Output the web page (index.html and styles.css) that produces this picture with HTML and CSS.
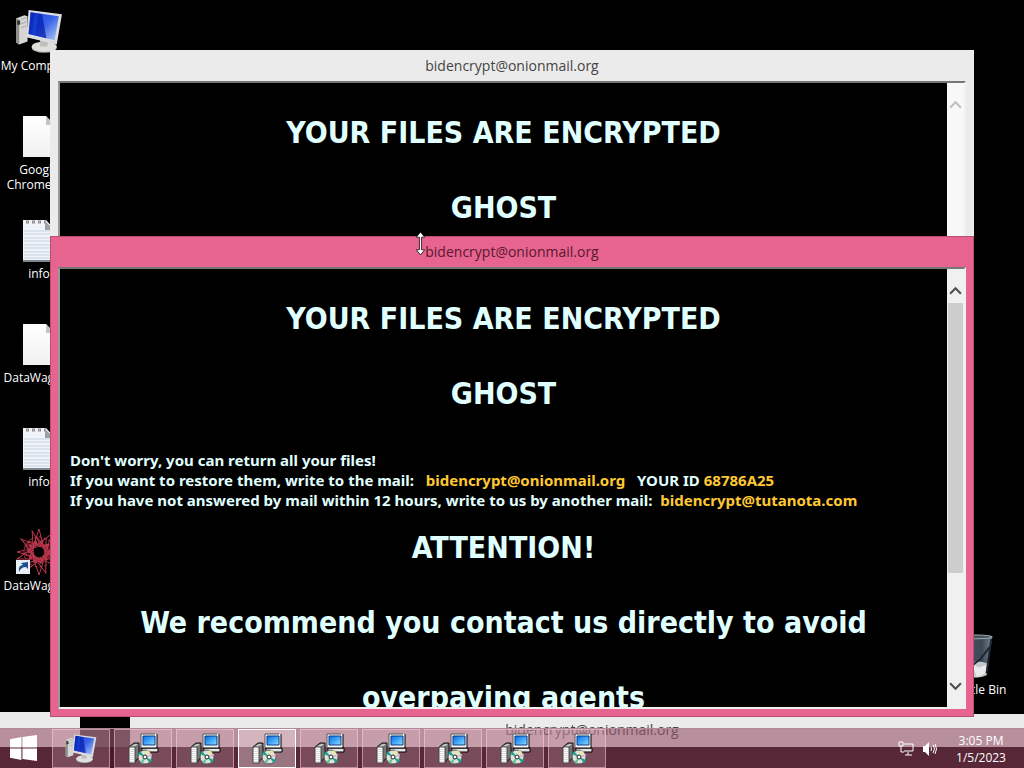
FILE: index.html
```html
<!DOCTYPE html>
<html lang="en">
<head>
    <meta charset="UTF-8">
    <meta name="viewport" content="width=device-width, initial-scale=1.0">
    <title>Desktop</title>
    <link rel="stylesheet" href="styles.css">
</head>
<body>

    <svg class="defs" aria-hidden="true">
        <defs>
            <linearGradient id="screen" x1="0" y1="0" x2="1" y2="1">
                <stop offset="0" stop-color="#1a3fe0"/>
                <stop offset="0.5" stop-color="#3a63e6"/>
                <stop offset="1" stop-color="#b4ccf8"/>
            </linearGradient>
            <linearGradient id="paper" x1="0" y1="0" x2="0" y2="1">
                <stop offset="0" stop-color="#ffffff"/>
                <stop offset="1" stop-color="#f0f0f0"/>
            </linearGradient>
            <linearGradient id="glass" x1="0" y1="0" x2="1" y2="0">
                <stop offset="0" stop-color="#4d5a66"/>
                <stop offset="0.7" stop-color="#3c4853"/>
                <stop offset="1" stop-color="#77838d"/>
            </linearGradient>
            <linearGradient id="crt" x1="0" y1="0" x2="1" y2="1">
                <stop offset="0" stop-color="#0a6fe8"/>
                <stop offset="0.5" stop-color="#3fa5f8"/>
                <stop offset="1" stop-color="#8edcff"/>
            </linearGradient>
        </defs>
        <symbol id="computer" viewBox="4 4 46 46">
            <path d="M5 14l8-3 3 1v24l-8 3-3-2z" fill="#d6d6d2"/>
            <path d="M5 14l3 1v24l-3-2z" fill="#8e8e8a"/>
            <path d="M6 16h3v4H6z" fill="#333"/>
            <path d="M10 15l5-2M10 19l5-2M10 23l5-2" stroke="#aaa"/>
            <ellipse cx="32" cy="42" rx="12" ry="5" fill="#a9aaa8"/>
            <ellipse cx="32" cy="41" rx="12" ry="5" fill="#dfdfdc"/>
            <path d="M28 32l8 2-1 7h-7z" fill="#bfc0be"/>
            <path d="M17 6l32 4-5 29-29-7z" fill="#dcdde0"/>
            <path d="M19 8l27 4-4 23-25-6z" fill="url(#screen)"/>
            <path d="M19 8l11 2 4 23-17-4z" fill="#0520b0" opacity="0.75"/>
            <path d="M23 9l-3 20 4 1 2-20z" fill="#1746dc" opacity="0.6"/>
        </symbol>
        <symbol id="file" viewBox="0 0 32 42">
            <path d="M0 0h23l9 10v31H0z" fill="url(#paper)"/>
            <path d="M23 0v9h9z" fill="#c4c4c4"/>
        </symbol>
        <symbol id="notes" viewBox="0 0 32 42">
            <path d="M0 0h23l9 10v31H0z" fill="#f0f4f8"/>
            <path d="M1 11h30M1 14h30M1 18h30M1 21h30M1 25h30M1 28h30M1 32h30M1 35h30M1 38h30" stroke="#c5d3e3"/>
            <path d="M3 2h20" stroke="#888" stroke-width="3" stroke-dasharray="3 3"/>
            <path d="M4 2h20" stroke="#f0f4f8" stroke-dasharray="1 5"/>
            <path d="M0 41h32" stroke="#7d858d" stroke-width="2"/>
            <path d="M22 1v9h9z" fill="#9aa0a6"/>
        </symbol>
        <symbol id="star" viewBox="0 0 48 48">
            <g fill="none" stroke="#b8364c" stroke-width="1">
                <path d="M24 1l8 31L2 24l32-8-10 31L13 13l33 11-33 11z"/>
                <path d="M24 1l8 31L2 24l32-8-10 31L13 13l33 11-33 11z" transform="rotate(36 24 24)"/>
                <path d="M24 1l8 31L2 24l32-8-10 31L13 13l33 11-33 11z" transform="rotate(72 24 24)"/>
                <circle cx="24" cy="24" r="10" stroke-width="3" stroke-dasharray="3 3"/>
                <circle cx="24" cy="24" r="15" stroke-dasharray="3 2"/>
            </g>
            <circle cx="24" cy="24" r="5" fill="#000"/>
        </symbol>
        <symbol id="bin" viewBox="0 0 40 48">
            <path d="M2 3l5 40q13 6 25 0l6-40z" fill="url(#glass)"/>
            <path d="M7 32l2 11q12 5 23 0l2-12q-13-5-27 1z" fill="#c3c8c8"/>
            <path d="M17 32l7 3 8-3-1 9-9 4" fill="#e8eaea"/>
            <path d="M35 14l-9 12-8 6M37 5l-5 36" stroke="#1c2530" stroke-width="2" fill="none"/>
            <ellipse cx="20" cy="3" rx="18" ry="2" fill="#46525c" stroke="#a5adb3"/>
        </symbol>
        <symbol id="installer" viewBox="0 0 32 32">
            <path d="M2 14l5-4h5v14l-5 6z" fill="#777" stroke="#111"/>
            <path d="M3 14l5-3h3l-4 3z" fill="#ccc"/>
            <path d="M2 14h6v16H2z" fill="#fff" stroke="#444"/>
            <path d="M4 16v13M6 16v13" stroke="#b5b5b5" stroke-dasharray="1 1"/>
            <path d="M15 15h16v4H15z" fill="#e6e6e6" stroke="#000"/>
            <path d="M14 1h16v14H14z" fill="#f8f8f8"/>
            <path d="M14 14V1h14" fill="none" stroke="#555"/>
            <path d="M30 1v14H14" fill="none" stroke="#000"/>
            <path d="M16 3h12v9H16z" fill="url(#crt)" stroke="#0c3a80"/>
            <circle cx="18" cy="24" r="7" fill="#dde2dd" stroke="#555"/>
            <path d="M18 24l-7-3 2-3zM18 24l7 3-2 3z" fill="#19a08c"/>
            <path d="M18 24l2-7 3 2z" fill="#ece9a0"/>
            <path d="M18 24l-5 5 3 2z" fill="#69c39a"/>
            <path d="M18 24l7-3v2z" fill="#d8a6c8"/>
            <circle cx="18" cy="24" r="2" fill="#fff" stroke="#222"/>
        </symbol>
    </svg>

    <main class="desktop">
        <ul class="icons">
            <li class="icon"><svg class="icon-large"><use href="#computer"/></svg><span>My Computer</span></li>
            <li class="icon"><svg class="icon-file"><use href="#file"/></svg><span>Google<br>Chrome.lnk</span></li>
            <li class="icon"><svg class="icon-file"><use href="#notes"/></svg><span>info</span></li>
            <li class="icon"><svg class="icon-file"><use href="#file"/></svg><span>DataWagons</span></li>
            <li class="icon"><svg class="icon-file"><use href="#notes"/></svg><span>info</span></li>
            <li class="icon">
                <svg class="icon-large" viewBox="0 0 48 48">
                    <use href="#star"/>
                    <path d="M1 32h14v14H1z" fill="#e8eef5"/>
                    <path d="M4 44q-1-7 4-7l-2-2 7-1v7l-2-2q-5 0-7 5z" fill="#1f4f91"/>
                </svg>
                <span>DataWagons</span>
            </li>
        </ul>
        <div class="icon recycle"><svg class="icon-bin"><use href="#bin"/></svg><span>Recycle Bin</span></div>

        <section class="window window-left"></section>
        <section class="window window-low">
            <header class="title">bidencrypt@onionmail.org</header>
        </section>

        <section class="window window-back">
            <header class="title">bidencrypt@onionmail.org</header>
            <div class="frame">
                <div class="note">
                    <h1>YOUR FILES ARE ENCRYPTED</h1>
                    <h1>GHOST</h1>
                </div>
                <div class="scrollbar">
                    <button type="button" class="arrow" aria-label="Scroll up"><svg viewBox="0 0 12 10"><path d="M1 8l5-5 5 5"/></svg></button>
                </div>
            </div>
        </section>

        <section class="window window-active">
            <header class="title">bidencrypt@onionmail.org</header>
            <div class="frame">
                <div class="note">
                    <h1>YOUR FILES ARE ENCRYPTED</h1>
                    <h1>GHOST</h1>
                    <p>
                        Don't worry, you can return all your files!<br>
                        If you want to restore them, write to the mail: &nbsp; <b>bidencrypt@onionmail.org</b> &nbsp; YOUR ID <b>68786A25</b><br>
                        If you have not answered by mail within 12 hours, write to us by another mail: &nbsp;<b>bidencrypt@tutanota.com</b>
                    </p>
                    <h1>ATTENTION!</h1>
                    <h1>We recommend you contact us directly to avoid</h1>
                    <h1>overpaying agents</h1>
                </div>
                <div class="scrollbar">
                    <button type="button" class="arrow" aria-label="Scroll up"><svg viewBox="0 0 12 10"><path d="M1 8l5-5 5 5"/></svg></button>
                    <div class="track"><div class="thumb"></div></div>
                    <button type="button" class="arrow arrow-down" aria-label="Scroll down"><svg viewBox="0 0 12 10"><path d="M1 2l5 5 5-5"/></svg></button>
                </div>
            </div>
        </section>

        <svg class="cursor" viewBox="0 0 10 22"><path d="M5 0l4 5H6v12h3l-4 5-4-5h3V5H1z" fill="#fff" stroke="#000" stroke-width="0.7"/></svg>
    </main>

    <footer class="taskbar">
        <button type="button" class="start" aria-label="Start">
            <svg viewBox="0 0 26 26"><path d="M0 4l11-2v10H0zM12 2l14-2v12H12zM0 13h11v11L0 22zM12 13h14v12l-14-2z" fill="#fff"/></svg>
        </button>
        <nav class="tasks">
            <button type="button" class="task" aria-label="My Computer"><svg><use href="#computer"/></svg></button>
            <button type="button" class="task" aria-label="Window 1"><svg><use href="#installer"/></svg></button>
            <button type="button" class="task" aria-label="Window 2"><svg><use href="#installer"/></svg></button>
            <button type="button" class="task current" aria-label="Window 3"><svg><use href="#installer"/></svg></button>
            <button type="button" class="task" aria-label="Window 4"><svg><use href="#installer"/></svg></button>
            <button type="button" class="task" aria-label="Window 5"><svg><use href="#installer"/></svg></button>
            <button type="button" class="task" aria-label="Window 6"><svg><use href="#installer"/></svg></button>
            <button type="button" class="task" aria-label="Window 7"><svg><use href="#installer"/></svg></button>
            <button type="button" class="task" aria-label="Window 8"><svg><use href="#installer"/></svg></button>
        </nav>
        <div class="tray">
            <svg viewBox="0 0 16 16"><path d="M6 3h9v7H6M10 11v3M7 14h7M1 1h4v4H1zM3 5v6h3" fill="none" stroke="#fff"/></svg>
            <svg viewBox="0 0 16 16"><path d="M1 5h2l4-4v14l-4-4H1z" fill="#fff"/><path d="M9 6q1 2 0 4M11 4q3 4 0 8M13 3q3 5 0 10" fill="none" stroke="#fff"/></svg>
        </div>
        <div class="clock">
            <span>3:05 PM</span>
            <span>1/5/2023</span>
        </div>
    </footer>

</body>
</html>
```

FILE: styles.css
```css
* {
    box-sizing: border-box;
}
body {
    margin: 0;
    height: 100vh;
    overflow: hidden;
    background: #000;
    font-family: "Open Sans", "Noto Sans", sans-serif;
}
.defs {
    position: absolute;
    width: 0;
    height: 0;
}
.desktop {
    position: relative;
    height: 100%;
    overflow: hidden;
}

/* desktop icons */
.icons {
    display: grid;
    grid-auto-rows: 104px;
    width: 78px;
    margin: 0;
    padding: 8px 0 0;
    list-style: none;
}
.icon {
    display: flex;
    flex-direction: column;
    align-items: center;
    width: 78px;
    color: #fff;
    font-size: 12px;
    line-height: 15px;
    text-align: center;
    white-space: nowrap;
}
.icon svg {
    flex: none;
    margin-bottom: 2px;
}
.icon-large {
    width: 48px;
    height: 48px;
}
.icon .icon-file {
    width: 32px;
    height: 42px;
    margin: 4px 0;
}
.icon-bin {
    width: 40px;
    height: 46px;
}
.recycle {
    position: absolute;
    right: 10px;
    bottom: 71px;
}

/* windows */
.window {
    position: absolute;
    display: flex;
    flex-direction: column;
    padding: 0 8px 8px;
    background: #ebebeb;
}
.window-left {
    left: 0;
    bottom: 0;
    width: 80px;
    height: 56px;
}
.window-low {
    left: 130px;
    right: -30px;
    bottom: 0;
    height: 54px;
}
.window-back {
    left: 50px;
    right: 50px;
    top: 50px;
    height: 482px;
}
.window-active {
    left: 50px;
    right: 50px;
    top: 236px;
    bottom: 51px;
    background: #e6648f;
    border: 1px solid #b84e72;
    padding: 0 7px 7px;
}
.title {
    flex: none;
    height: 31px;
    color: #444;
    font-size: 14px;
    line-height: 31px;
    text-align: center;
}
.window-active .title {
    height: 30px;
    line-height: 30px;
    color: #5a1730;
}
.frame {
    flex: 1;
    display: flex;
    min-height: 0;
    border: 2px solid #f0f0f0;
    border-top-color: #777;
    border-left-color: #999;
}
.note {
    flex: 1;
    padding: 0 10px;
    overflow: hidden;
    background: #000;
    color: #e0ffff;
    font-family: "DejaVu Sans Condensed", "DejaVu Sans", sans-serif;
    font-weight: bold;
}
.note h1 {
    margin: 0;
    padding: 18px 0;
    font-size: 30px;
    line-height: 39px;
    text-align: center;
}
.note h1:first-child {
    padding-top: 30px;
}
.note p {
    margin: 19px 0 0;
    font-family: "Noto Sans", "Open Sans", sans-serif;
    font-size: 15px;
    line-height: 20px;
    white-space: nowrap;
}
.note b {
    color: #ffc832;
    font-weight: bold;
}
.scrollbar {
    display: flex;
    flex-direction: column;
    width: 17px;
    background: #f0f0f0;
}
.window-back .scrollbar {
    background: #f8f8f8;
}
.arrow {
    height: 34px;
    padding: 8px 0 0;
    border: 0;
    background: none;
}
.arrow-down {
    padding: 0 0 8px;
}
.arrow svg {
    display: block;
    width: 13px;
    height: 11px;
    margin: 0 auto;
    fill: none;
    stroke: #505050;
    stroke-width: 2;
}
.window-back .arrow svg {
    stroke: #bfbfbf;
}
.track {
    flex: 1;
    padding: 0 1px;
}
.thumb {
    height: 73%;
    background: #cdcdcd;
}
.cursor {
    position: absolute;
    left: 415px;
    top: 232px;
    width: 11px;
    height: 23px;
}

/* taskbar */
.taskbar {
    position: absolute;
    left: 0;
    right: 0;
    bottom: 0;
    display: flex;
    height: 40px;
    background: linear-gradient(rgba(152, 86, 108, 0.62) 18px, rgba(78, 26, 44, 0.94) 18px);
    border-top: 1px solid #b08a98;
}
.start {
    width: 52px;
    padding: 0 0 0 10px;
    border: 0;
    background: none;
}
.start svg {
    display: block;
    width: 27px;
    height: 27px;
}
.tasks {
    display: flex;
    flex: 1;
    gap: 4px;
}
.task {
    width: 58px;
    padding: 0;
    border: 1px solid rgba(255, 210, 225, 0.5);
    background: rgba(255, 220, 230, 0.2);
}
.task.current {
    border-color: #fff;
    background: rgba(255, 235, 240, 0.4);
}
.task svg {
    display: block;
    width: 32px;
    height: 32px;
    margin: 0 auto;
}
.tray {
    display: flex;
    gap: 8px;
    align-items: center;
    padding-right: 18px;
}
.tray svg {
    width: 16px;
    height: 16px;
}
.clock {
    display: flex;
    flex-direction: column;
    width: 50px;
    margin-right: 18px;
    padding-top: 3px;
    color: #fff;
    font-size: 12px;
    line-height: 17px;
    text-align: center;
}
```
